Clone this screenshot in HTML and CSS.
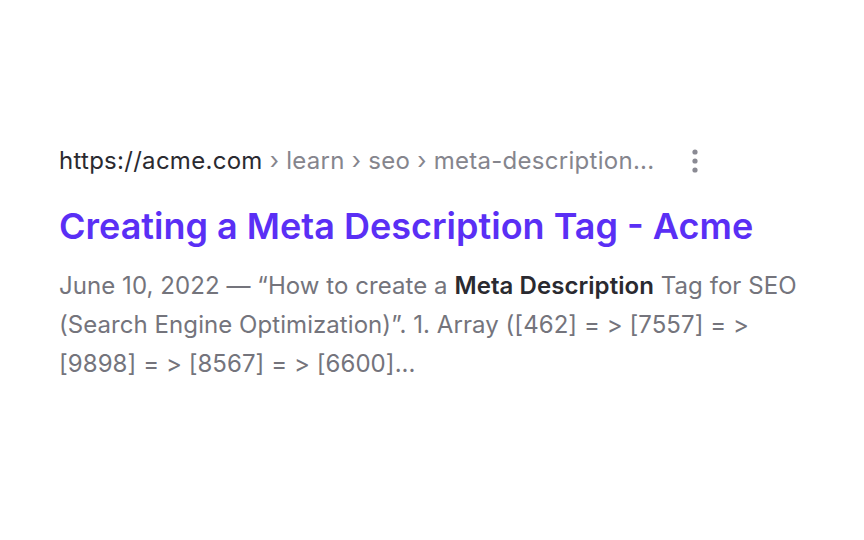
FILE: index.html
```html
<!DOCTYPE html>
<html>
<head>
<meta charset="utf-8">
<link rel="stylesheet" href="styles.css">
</head>
<body>
<div class="page">
  <div class="result">
    <div class="crumbs">
      <span class="url">https://acme.com <span class="path">› learn › seo › meta-description...</span></span>
      <span class="more" aria-label="More">
        <svg width="6" height="24" viewBox="0 0 6 24"><circle cx="3" cy="3" r="2.6" fill="#8a8a93"/><circle cx="3" cy="12" r="2.6" fill="#8a8a93"/><circle cx="3" cy="21" r="2.6" fill="#8a8a93"/></svg>
      </span>
    </div>
    <h1 class="title">Creating a Meta Description Tag - Acme</h1>
    <p class="desc">June 10, 2022 — “How to create a <b>Meta Description</b> Tag for SEO (Search Engine Optimization)”. 1. Array ([462] = &gt; [7557] = &gt; [9898] = &gt; [8567] = &gt; [6600]...</p>
  </div>
</div>
</body>
</html>
```

FILE: styles.css
```css
html, body {
  margin: 0;
  padding: 0;
  background: #ffffff;
}
body {
  font-family: Inter, "Noto Sans", sans-serif;
  width: 864px;
  height: 540px;
}
.page {
  padding: 142px 59px 0 59px;
}
.result {
  width: 746px;
}
.crumbs {
  display: flex;
  align-items: center;
  gap: 38px;
  height: 38px;
  font-size: 24px;
  line-height: 38px;
  letter-spacing: 0.28px;
}
.url {
  color: #2a2a30;
}
.path {
  color: #85858d;
}
.more {
  display: flex;
  align-items: center;
  margin-top: -1px;
}
.title {
  margin: 25px 0 0 0;
  font-size: 36px;
  font-weight: 600;
  line-height: 42px;
  color: #5a2ff5;
}
.desc {
  margin: 19px 0 0 0;
  font-size: 24px;
  line-height: 39px;
  color: #74747c;
  letter-spacing: 0.06px;
}
.desc b {
  font-weight: 600;
  color: #2a2a30;
}
```
